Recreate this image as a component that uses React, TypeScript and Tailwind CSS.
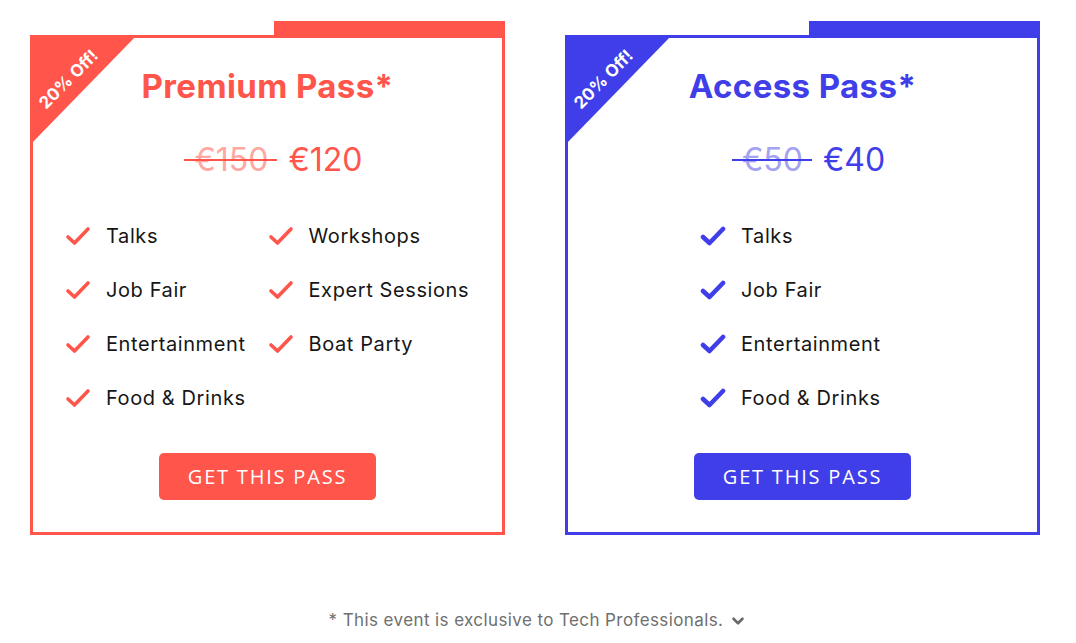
import React from "react";
import { ChevronDown } from "lucide-react";

type Pass = {
  name: string;
  oldPrice: string;
  price: string;
  color: "red" | "blue";
  features: string[];
};

const passes: Pass[] = [
  {
    name: "Premium Pass",
    oldPrice: "€150",
    price: "€120",
    color: "red",
    features: [
      "Talks",
      "Workshops",
      "Job Fair",
      "Expert Sessions",
      "Entertainment",
      "Boat Party",
      "Food & Drinks",
    ],
  },
  {
    name: "Access Pass",
    oldPrice: "€50",
    price: "€40",
    color: "blue",
    features: ["Talks", "Job Fair", "Entertainment", "Food & Drinks"],
  },
];

const theme = {
  red: {
    border: "border-[#ff554b]",
    bg: "bg-[#ff554b]",
    text: "text-[#ff554b]",
    faded: "text-[#ffa8a2]",
    stroke: "#ff554b",
    width: 3.6,
  },
  blue: {
    border: "border-[#403ee8]",
    bg: "bg-[#403ee8]",
    text: "text-[#403ee8]",
    faded: "text-[#a3a2f3]",
    stroke: "#403ee8",
    width: 4.6,
  },
};

const Check: React.FC<{ color: string; width: number }> = ({ color, width }) => (
  <svg width="26" height="20" viewBox="0 0 26 20" className="shrink-0">
    <polyline
      points="3,11 9.5,17 23,3"
      fill="none"
      stroke={color}
      strokeWidth={width}
      strokeLinecap="round"
      strokeLinejoin="round"
    />
  </svg>
);

const PassCard: React.FC<{ pass: Pass }> = ({ pass }) => {
  const t = theme[pass.color];
  const twoCols = pass.features.length > 4;

  return (
    <div
      className={`relative flex h-[500px] w-[475px] shrink-0 flex-col items-center border-[3px] bg-white ${t.border}`}
    >
      {/* tab sticking out above the card */}
      <div className={`absolute -right-[3px] -top-[17px] h-[16px] w-[231px] ${t.bg}`} />

      {/* corner ribbon */}
      <div
        className={`absolute -left-[3px] -top-[3px] h-[110px] w-[107px] [clip-path:polygon(0_0,100%_0,0_100%)] ${t.bg}`}
      >
        <span className="absolute left-[1px] top-[36px] block -rotate-45 whitespace-nowrap text-[17px] font-bold leading-none text-white">
          20% Off!
        </span>
      </div>

      <h2
        className={`mt-[30px] text-[33px] font-bold leading-[36px] tracking-[0.4px] ${t.text}`}
      >
        {pass.name}*
      </h2>

      <div className="ml-[22px] mt-[36px] flex h-[40px] items-center gap-[20px] text-[32px] leading-[40px]">
        <span className={`relative ${t.faded}`}>
          {pass.oldPrice}
          <span
            className={`absolute -left-[10px] -right-[9px] top-[19px] h-[2px] ${t.bg}`}
          />
        </span>
        <span className={t.text}>{pass.price}</span>
      </div>

      <ul
        className={`mt-[29px] grid self-stretch ${
          twoCols ? "grid-cols-2 px-[32px]" : "grid-cols-1 pl-[132px]"
        }`}
      >
        {pass.features.map((f) => (
          <li key={f} className="flex h-[54px] items-center gap-[15px]">
            <Check color={t.stroke} width={t.width} />
            <span className="whitespace-nowrap text-[20px] tracking-[0.6px] text-[#161616]">
              {f}
            </span>
          </li>
        ))}
        {twoCols && pass.features.length % 2 === 1 ? <li className="h-[54px]" /> : null}
      </ul>

      <button
        type="button"
        className={`mt-[28px] h-[47px] w-[217px] rounded-[5px] text-[20px] tracking-[1.8px] text-white ${t.bg}`}
        style={{ fontFamily: '"Open Sans", "Noto Sans", sans-serif' }}
      >
        GET THIS PASS
      </button>
    </div>
  );
};

export default function App() {
  return (
    <div
      className="min-h-[643px] w-full overflow-hidden bg-white"
      style={{ fontFamily: 'Inter, "Noto Sans", "Liberation Sans", sans-serif' }}
    >
      <div className="flex gap-[60px] pl-[30px] pt-[35px]">
        {passes.map((p) => (
          <PassCard key={p.name} pass={p} />
        ))}
      </div>

      <div className="mt-[73px] flex items-center justify-center gap-[6px] text-[17px] tracking-[0.4px] text-[#6f6f6f]">
        <span>* This event is exclusive to Tech Professionals.</span>
        <ChevronDown className="h-[18px] w-[18px] text-[#6a6a6a]" strokeWidth={3.5} />
      </div>
    </div>
  );
}
